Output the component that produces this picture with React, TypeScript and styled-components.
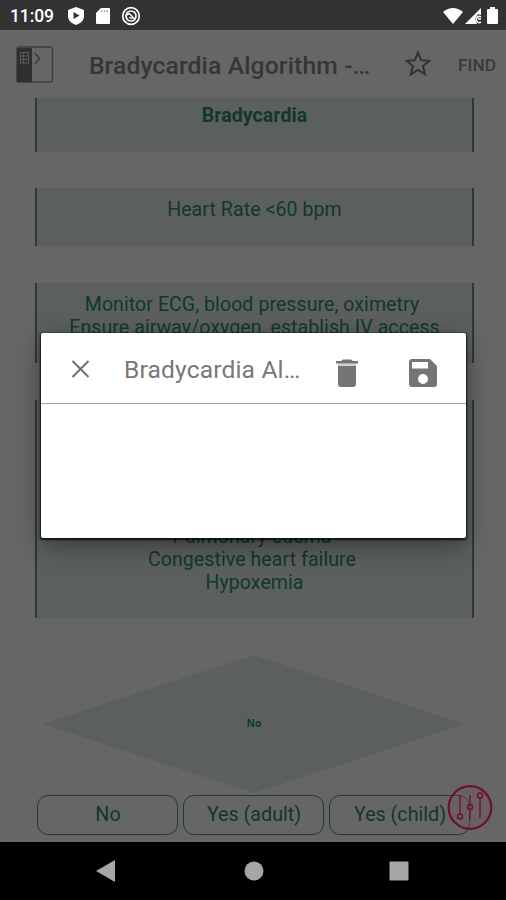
import React from 'react';
import styled, { createGlobalStyle } from 'styled-components';

const Global = createGlobalStyle`
  * { box-sizing: border-box; }
  body { margin: 0; background: #666; font-family: Roboto, "Liberation Sans", sans-serif; }
`;

const Screen = styled.div`
  position: relative;
  width: 506px;
  height: 900px;
  display: flex;
  flex-direction: column;
  overflow: hidden;
  background: #666;
`;

const StatusBar = styled.div`
  height: 30px;
  flex: none;
  display: flex;
  align-items: center;
  padding: 1px 6px 0 10px;
  background: #323232;
  color: #fff;
`;

const Clock = styled.span`
  width: 57px;
  font-size: 17.5px;
  font-weight: 500;
  letter-spacing: -0.1px;
`;

const StatusIcons = styled.div`
  flex: 1;
  display: flex;
  align-items: center;
  gap: 11px;
`;

const SignalIcons = styled.div`
  display: flex;
  align-items: center;
  gap: 2px;
`;

const Header = styled.header`
  height: 68px;
  flex: none;
  display: flex;
  align-items: center;
  padding: 0 10px 0 16px;
  color: #363636;
`;

const Title = styled.h1`
  margin: 3px 0 0 35px;
  width: 317px;
  font-size: 24.7px;
  font-weight: 500;
  letter-spacing: 0.12px;
  white-space: nowrap;
`;

const Find = styled.span`
  margin: 2px 0 0 27px;
  font-size: 17.3px;
  font-weight: 500;
  color: #3a3a3a;
`;

const Flow = styled.main`
  height: 744px;
  flex: none;
  display: flex;
  flex-direction: column;
  padding: 0 32px 0 35px;
  color: #12372b;
`;

const Step = styled.section<{ $height: number; $gap: number; $top?: number; $bottom?: boolean; $bold?: boolean }>`
  height: ${p => p.$height}px;
  flex: none;
  margin-bottom: ${p => p.$gap}px;
  padding: ${p => p.$top ?? 10}px 0 ${p => (p.$bottom ? 24 : 0)}px;
  display: flex;
  flex-direction: column;
  align-items: center;
  justify-content: ${p => (p.$bottom ? 'flex-end' : 'flex-start')};
  background: #5b605e;
  border: solid #2c3a35;
  border-width: 0 2px;
  font-size: 19.5px;
  font-weight: ${p => (p.$bold ? 700 : 400)};
  line-height: 23px;
`;

const Line = styled.div<{ $trailing?: boolean }>`
  white-space: nowrap;
  letter-spacing: 0.09px;
  padding-right: ${p => (p.$trailing ? 5 : 0)}px;
`;

const Decision = styled.div`
  width: 422px;
  height: 138px;
  flex: none;
  margin: 0 0 2px 8px;
  padding-bottom: 2px;
  display: flex;
  align-items: center;
  justify-content: center;
  clip-path: polygon(50% 0, 100% 50%, 50% 100%, 0 50%);
  background: #5b605e;
  font: 700 10.5px "Open Sans", sans-serif;
`;

const Choices = styled.div`
  display: flex;
  gap: 5px;
  padding-left: 2px;
`;

const Choice = styled.button`
  width: 141px;
  height: 40px;
  flex: none;
  padding: 0 0 2px 1px;
  border: 1.5px solid #203c32;
  border-radius: 11px;
  background: transparent;
  color: #12372b;
  font: 400 19.7px Roboto, sans-serif;
`;

const NavBar = styled.nav`
  height: 58px;
  flex: none;
  display: flex;
  align-items: center;
  justify-content: space-between;
  padding: 0 97px 0 96px;
  background: #000;
`;

const Tools = styled.div`
  position: absolute;
  left: 447px;
  top: 784px;
  width: 46px;
  height: 46px;
`;

const Dialog = styled.div`
  position: absolute;
  left: 41px;
  top: 333px;
  width: 425px;
  height: 205px;
  border-radius: 2px;
  background: #fff;
  box-shadow: 0 1px 2px 1px rgba(0, 0, 0, 0.75), 0 8px 24px rgba(0, 0, 0, 0.4);
`;

const DialogBar = styled.div`
  height: 71px;
  display: flex;
  align-items: center;
  padding: 2px 28px 0 29px;
  border-bottom: 1px solid #a2a2a2;
  color: #787878;
`;

const DialogTitle = styled.div`
  width: 211px;
  margin-left: 34px;
  font-size: 24.6px;
  letter-spacing: 0.15px;
  white-space: nowrap;
`;

const Actions = styled.div`
  flex: 1;
  display: flex;
  align-items: center;
  justify-content: space-between;
  padding: 8px 0 0;
`;

const StatusGlyphs = () => (
  <>
    <svg width="18" height="20" viewBox="0 0 18 20">
      <path d="M9 1 17 4v6c0 4.500-3.500 7.500-8 9-4.500-1.500-8-4.500-8-9V4z" fill="#fff" />
      <path d="M6.500 6v7l6-3.500z" fill="#323232" />
    </svg>
    <svg width="14" height="18" viewBox="0 0 14 18">
      <path d="M5 1h8q1 0 1 1v14q0 1-1 1H1q-1 0-1-1V6z" fill="#fff" />
      <path d="M5.500 3v2M8.300 3v2M11 3v2" stroke="#999" strokeWidth="1.200" />
    </svg>
    <svg width="20" height="20" viewBox="0 0 20 20" fill="none" stroke="#fff">
      <circle cx="10" cy="10" r="8.300" strokeWidth="1.700" />
      <circle cx="10" cy="10" r="5" strokeWidth="1.700" />
      <path d="m5.500 9 3-1.500 5.500 6M8.500 11c1 2 3 1 4 0" strokeWidth="1.400" />
    </svg>
  </>
);

export default function App() {
  return (
    <>
      <Global />
      <Screen>
        <StatusBar>
          <Clock>11:09</Clock>
          <StatusIcons><StatusGlyphs /></StatusIcons>
          <SignalIcons>
            <svg width="20" height="18" viewBox="0 0 20 18"><path d="M0 5q10-8 20 0L10 17z" fill="#fff" /></svg>
            <svg width="17" height="18" viewBox="0 0 17 18">
              <path d="M0 17 16 1v7l-3-1-3 5 2 5z" fill="#fff" />
              <path d="M16 10a3 3 0 1 0 0 5M13 12h3" fill="none" stroke="#fff" strokeWidth="1.500" />
            </svg>
            <svg width="16" height="18" viewBox="0 0 16 18"><path d="M6 0h5v2h2q1 0 1 1v13q0 1-1 1H4q-1 0-1-1V3q0-1 1-1h2z" fill="#fff" /></svg>
          </SignalIcons>
        </StatusBar>

        <Header>
          <svg width="38" height="38" viewBox="0 0 38 38" fill="none">
            <rect x="1" y="2" width="35.500" height="35" rx="2" stroke="#3d3d3d" strokeWidth="1.500" />
            <path d="M1 3h15v34H1z" fill="#303030" />
            <path d="M4 7.500h9M4 11h9M4 14.500h9M4 18h9M4.500 7v11M7.500 7v11M12.500 7v11" stroke="#5a5a5a" strokeWidth="1" />
            <path d="m19 8 4.500 5.500L19 19" stroke="#3a3a3a" strokeWidth="1.500" />
          </svg>
          <Title>Bradycardia Algorithm -…</Title>
          <svg width="26" height="26" viewBox="0 0 26 26">
            <path d="m13 1.500 3.100 7.700 8.300.600-6.400 5.300 2.100 8.300-7.100-4.500-7.100 4.500L8 15.100 1.600 9.800l8.300-.600z" fill="none" stroke="#323232" strokeWidth="2" />
          </svg>
          <Find>FIND</Find>
        </Header>

        <Flow>
          <Step $height={54} $gap={36} $top={6} $bold><Line>Bradycardia</Line></Step>
          <Step $height={58} $gap={37}><Line>Heart Rate &lt;60 bpm</Line></Step>
          <Step $height={80} $gap={37}>
            <Line $trailing>Monitor ECG, blood pressure, oximetry</Line>
            <Line>Ensure airway/oxygen, establish IV access</Line>
          </Step>
          <Step $height={218} $gap={37} $bottom>
            <Line $trailing>Pulmonary edema</Line>
            <Line $trailing>Congestive heart failure</Line>
            <Line>Hypoxemia</Line>
          </Step>
          <Decision>No</Decision>
          <Choices>
            <Choice>No</Choice>
            <Choice>Yes (adult)</Choice>
            <Choice>Yes (child)</Choice>
          </Choices>
        </Flow>

        <NavBar>
          <svg width="22" height="22" viewBox="0 0 22 22"><path d="M19 0v22L0 11z" fill="#a6a6a6" /></svg>
          <svg width="20" height="20" viewBox="0 0 20 20"><circle cx="10" cy="10" r="9.500" fill="#a6a6a6" /></svg>
          <svg width="20" height="20" viewBox="0 0 20 20"><rect x=".5" y=".5" width="19" height="19" rx="1" fill="#a6a6a6" /></svg>
        </NavBar>

        <Tools>
          <svg width="46" height="46" viewBox="0 0 46 46" fill="none" stroke="#700f2b">
            <circle cx="23" cy="23.500" r="21.300" fill="rgba(110,85,92,.35)" strokeWidth="2.200" />
            <path d="M13 11v19M23 11v9M23 26v10M33 14v20" strokeWidth="1.600" opacity=".8" />
            <circle cx="13" cy="32.500" r="2.500" strokeWidth="1.400" />
            <circle cx="23" cy="23" r="2.500" strokeWidth="1.400" />
            <circle cx="33" cy="11.500" r="2.500" strokeWidth="1.400" />
          </svg>
        </Tools>

        <Dialog>
          <DialogBar>
            <svg width="20" height="20" viewBox="0 0 20 20"><path d="m2.500 2 16 16m0-16-16 16" stroke="#6e6e6e" strokeWidth="2" /></svg>
            <DialogTitle>Bradycardia Al…</DialogTitle>
            <Actions>
              <svg width="24" height="30" viewBox="0 0 24 30" fill="#757575">
                <path d="M1 3h5l2-1.500h8L18 3h5v2.500H1z" />
                <path d="M3 8h18v18q0 3-3 3H6q-3 0-3-3z" />
                <path d="M3 5.500h18V8H3z" opacity=".35" />
              </svg>
              <svg width="30" height="30" viewBox="0 0 30 30">
                <path fillRule="evenodd" d="M4 1h18l7 7v18q0 3-3 3H4q-3 0-3-3V4q0-3 3-3zm0 3v6.500h16V4zm11 12a5 5 0 1 0 0 10 5 5 0 0 0 0-10z" fill="#757575" />
              </svg>
            </Actions>
          </DialogBar>
        </Dialog>
      </Screen>
    </>
  );
}
